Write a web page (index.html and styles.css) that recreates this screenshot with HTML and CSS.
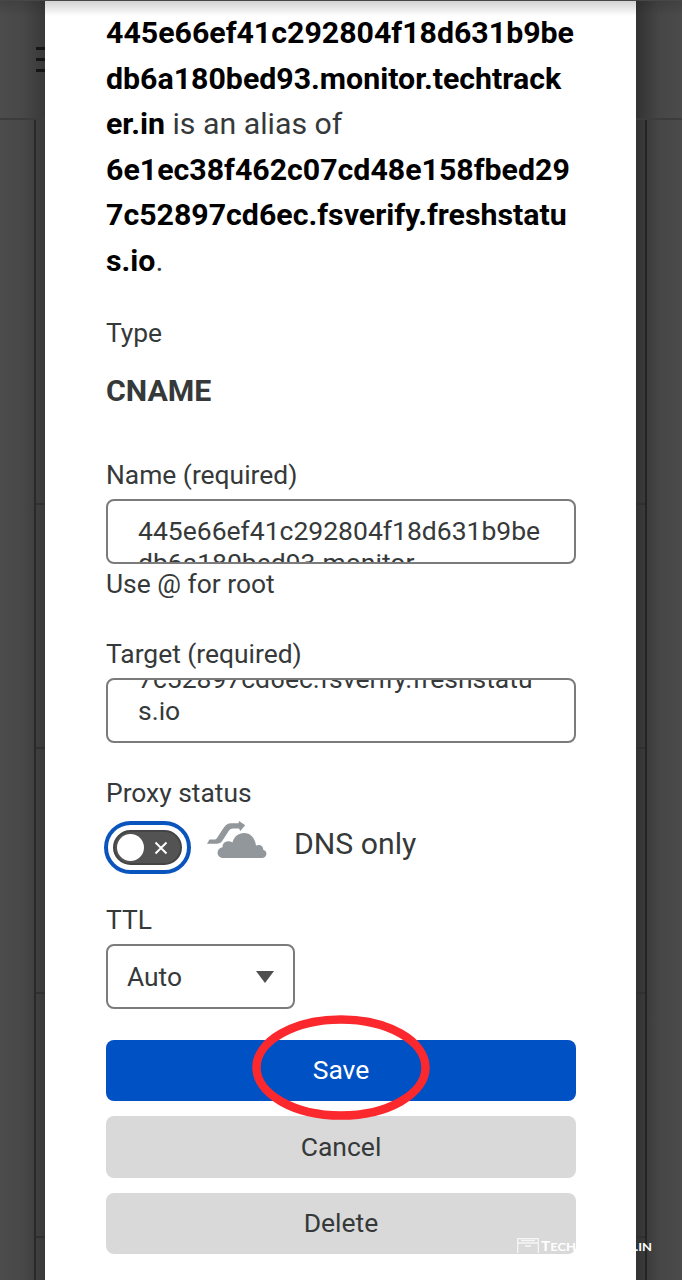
FILE: index.html
```html
<!DOCTYPE html>
<html lang="en">
<head>
<meta charset="utf-8">
<title>Edit DNS record</title>
<link rel="stylesheet" href="styles.css">
</head>
<body>
<div class="screen">
  <div class="rail rail-left">
    <div class="rail-header"><div class="menu"><i></i><i></i><i></i></div></div>
    <div class="rail-table"><i></i><i></i><i></i><i></i></div>
  </div>
  <main class="modal">
    <p class="summary"><b>445e66ef41c292804f18d631b9be<br>db6a180bed93.monitor.techtrack<br>er.in</b> is an alias of<br><b>6e1ec38f462c07cd48e158fbed29<br>7c52897cd6ec.fsverify.freshstatu<br>s.io</b>.</p>
    <div class="label type-label">Type</div>
    <div class="type-value">CNAME</div>
    <div class="label name-label">Name (required)</div>
    <div class="input"><div class="value">445e66ef41c292804f18d631b9be<br>db6a180bed93.monitor</div></div>
    <div class="label">Use @ for root</div>
    <div class="label target-label">Target (required)</div>
    <div class="input"><div class="value scrolled">7c52897cd6ec.fsverify.freshstatu<br>s.io</div></div>
    <div class="label proxy-label">Proxy status</div>
    <div class="proxy">
      <div class="focus-ring"><div class="toggle"><span class="knob"></span>
        <svg class="cross" viewBox="0 0 14 14"><path d="M1.500 1.500l11 11M12.500 1.500l-11 11"/></svg></div></div>
      <svg class="cloud" viewBox="0 0 60 38">
        <path class="fill" d="M-1 22.800L1.500 18.500H6.500Q8 18.500 9 17L15.500 7Q18.500 2.200 23 2.200H30.500L31 0L37.200 4.200L32.300 10L31 7.400H25Q22.500 7.400 21 9.500L14.500 19.500Q12.500 22.800 8.500 22.800Z"/>
        <path class="fill" d="M15.500 37C8 37 7.500 27.500 14.500 26.200C14.500 20.500 20.500 18.800 24.500 21.500C26 15.500 30.500 12 36 12C42 12 47 16.500 48 24.500C52.500 22.800 55.500 25.500 55.200 28.700C60 30 59.500 37 53.500 37Z"/>
      </svg>
      <span class="dns">DNS only</span>
    </div>
    <div class="label ttl-label">TTL</div>
    <div class="select"><span>Auto</span><svg viewBox="0 0 18 12"><path d="M0 0H18L9 12Z"/></svg></div>
    <div class="actions">
      <div class="button save">Save
        <svg class="highlight" viewBox="0 0 178 105"><ellipse cx="89" cy="52.500" rx="84.500" ry="48"/></svg></div>
      <div class="button">Cancel</div>
      <div class="button">Delete</div>
    </div>
  </main>
  <div class="rail rail-right">
    <div class="rail-header"></div>
    <div class="rail-table"><i></i><i></i><i></i><i></i></div>
  </div>
  <div class="top-edge"></div>
  <div class="watermark">
    <svg class="mark" viewBox="0 0 22 16"><path d="M.7 15V.7H21.300V15M1 5H21M4 2.500H18M8 8H14"/></svg>
    <svg class="wordmark" viewBox="0 0 112 20"><text x="0" y="15" textLength="111" lengthAdjust="spacingAndGlyphs"><tspan class="cap">T</tspan>ECH<tspan class="cap">T</tspan>RACKER.IN</text></svg>
  </div>
</div>
</body>
</html>
```
FILE: styles.css
```css
* { box-sizing: border-box; }
body { margin: 0; font-family: Roboto, "Liberation Sans", sans-serif; color: #36393a; }
.screen { position: relative; display: flex; width: 682px; height: 1280px; overflow: hidden; background: #454545; }
.rail { display: flex; flex-direction: column; }
.rail-left { width: 45px; background: linear-gradient(90deg, #4c4c4c, #484848 50%, #393939); }
.rail-right { width: 46px; background: linear-gradient(270deg, #4b4b4b, #464646 50%, #323232); }
.rail-header { height: 120px; border-bottom: 2px solid #3c3c3c; }
.menu { display: flex; flex-direction: column; gap: 8.500px; padding: 47px 0 0 36px; }
.menu i { height: 2.500px; background: #151515; }
.rail-table { flex: 1; display: flex; flex-direction: column; }
.rail-left .rail-table { margin-left: 34px; border-left: 2px solid #292929; }
.rail-right .rail-table { margin-right: 35px; border-right: 2px solid #242424; }
.rail-table i { height: 244.300px; border-bottom: 2px solid #303030; }
.rail-table i:first-child { height: 385px; }
.modal { width: 591px; padding: 10px 60px 0 61px; background: #fff; }
.summary { margin: 0; font-size: 30.300px; line-height: 45.500px; white-space: nowrap; }
.summary b { color: #000; font-weight: 700; }
.label { font-size: 26.400px; line-height: 40px; }
.type-label { margin-top: 30px; }
.type-value { margin-top: 18px; font-size: 30.300px; line-height: 40px; font-weight: 700; }
.name-label { margin: 44px 0 4px; }
.input { height: 65px; border: 2px solid #7b7b7b; border-radius: 8px; overflow: hidden; padding: 14px 30px 0; background: #fff; }
.value { font-size: 26.500px; line-height: 32px; white-space: nowrap; }
.scrolled { margin-top: -31px; }
.target-label { margin: 30px 0 4px; }
.proxy-label { margin-top: 30px; }
.proxy { display: flex; align-items: center; height: 53px; margin: 8px 0 0 -2px; }
.focus-ring { width: 87px; height: 53px; padding: 5px; border: 4px solid #0a55bd; border-radius: 27px; }
.toggle { display: flex; align-items: center; justify-content: space-between; height: 35px; padding: 0 12px 0 2px; border-radius: 18px; background: #535353; border: 2px solid #444; }
.knob { width: 27px; height: 27px; border-radius: 50%; background: #fff; }
.cross { width: 14px; height: 14px; fill: none; stroke: #fff; stroke-width: 2; }
.cloud { width: 60px; height: 38px; margin: -15px 0 0 17px; overflow: visible; }
.fill { fill: #92979b; }
.dns { margin: -7px 0 0 26px; font-size: 30.200px; line-height: 40px; }
.ttl-label { margin: 26px 0 4px; }
.select { display: flex; justify-content: space-between; align-items: center; width: 189px; height: 65px; padding: 0 19px; border: 2px solid #7b7b7b; border-radius: 8px; font-size: 26.400px; }
.select svg { width: 18px; height: 12px; fill: #4f4f4f; }
.actions { display: grid; gap: 15px; margin-top: 30.500px; }
.button { position: relative; display: flex; align-items: center; justify-content: center; height: 61.500px; padding-bottom: 1px; border-radius: 8px; background: #d9d9d9; font-size: 26.500px; }
.save { background: #0051c3; color: #fff; z-index: 1; }
.highlight { position: absolute; left: 146px; top: -24.500px; width: 178px; height: 105px; fill: none; stroke: #fb292e; stroke-width: 8.500; }
.top-edge { position: absolute; inset: 0 0 auto; height: 16px; background: linear-gradient(rgba(35,28,32,.2), transparent); border-top: 1px solid #49464a; }
.watermark { position: absolute; left: 517px; top: 1236px; z-index: 2; display: flex; align-items: center; gap: 2px; height: 20px; }
.mark { width: 22px; height: 16px; fill: none; stroke: #f6f6f6; stroke-width: 1.300; }
.wordmark { width: 112px; height: 20px; fill: #fff; font: 700 10.500px Lato, sans-serif; stroke: rgba(0,0,0,.025); stroke-width: .5; }
.cap { font-size: 12.500px; }
```
